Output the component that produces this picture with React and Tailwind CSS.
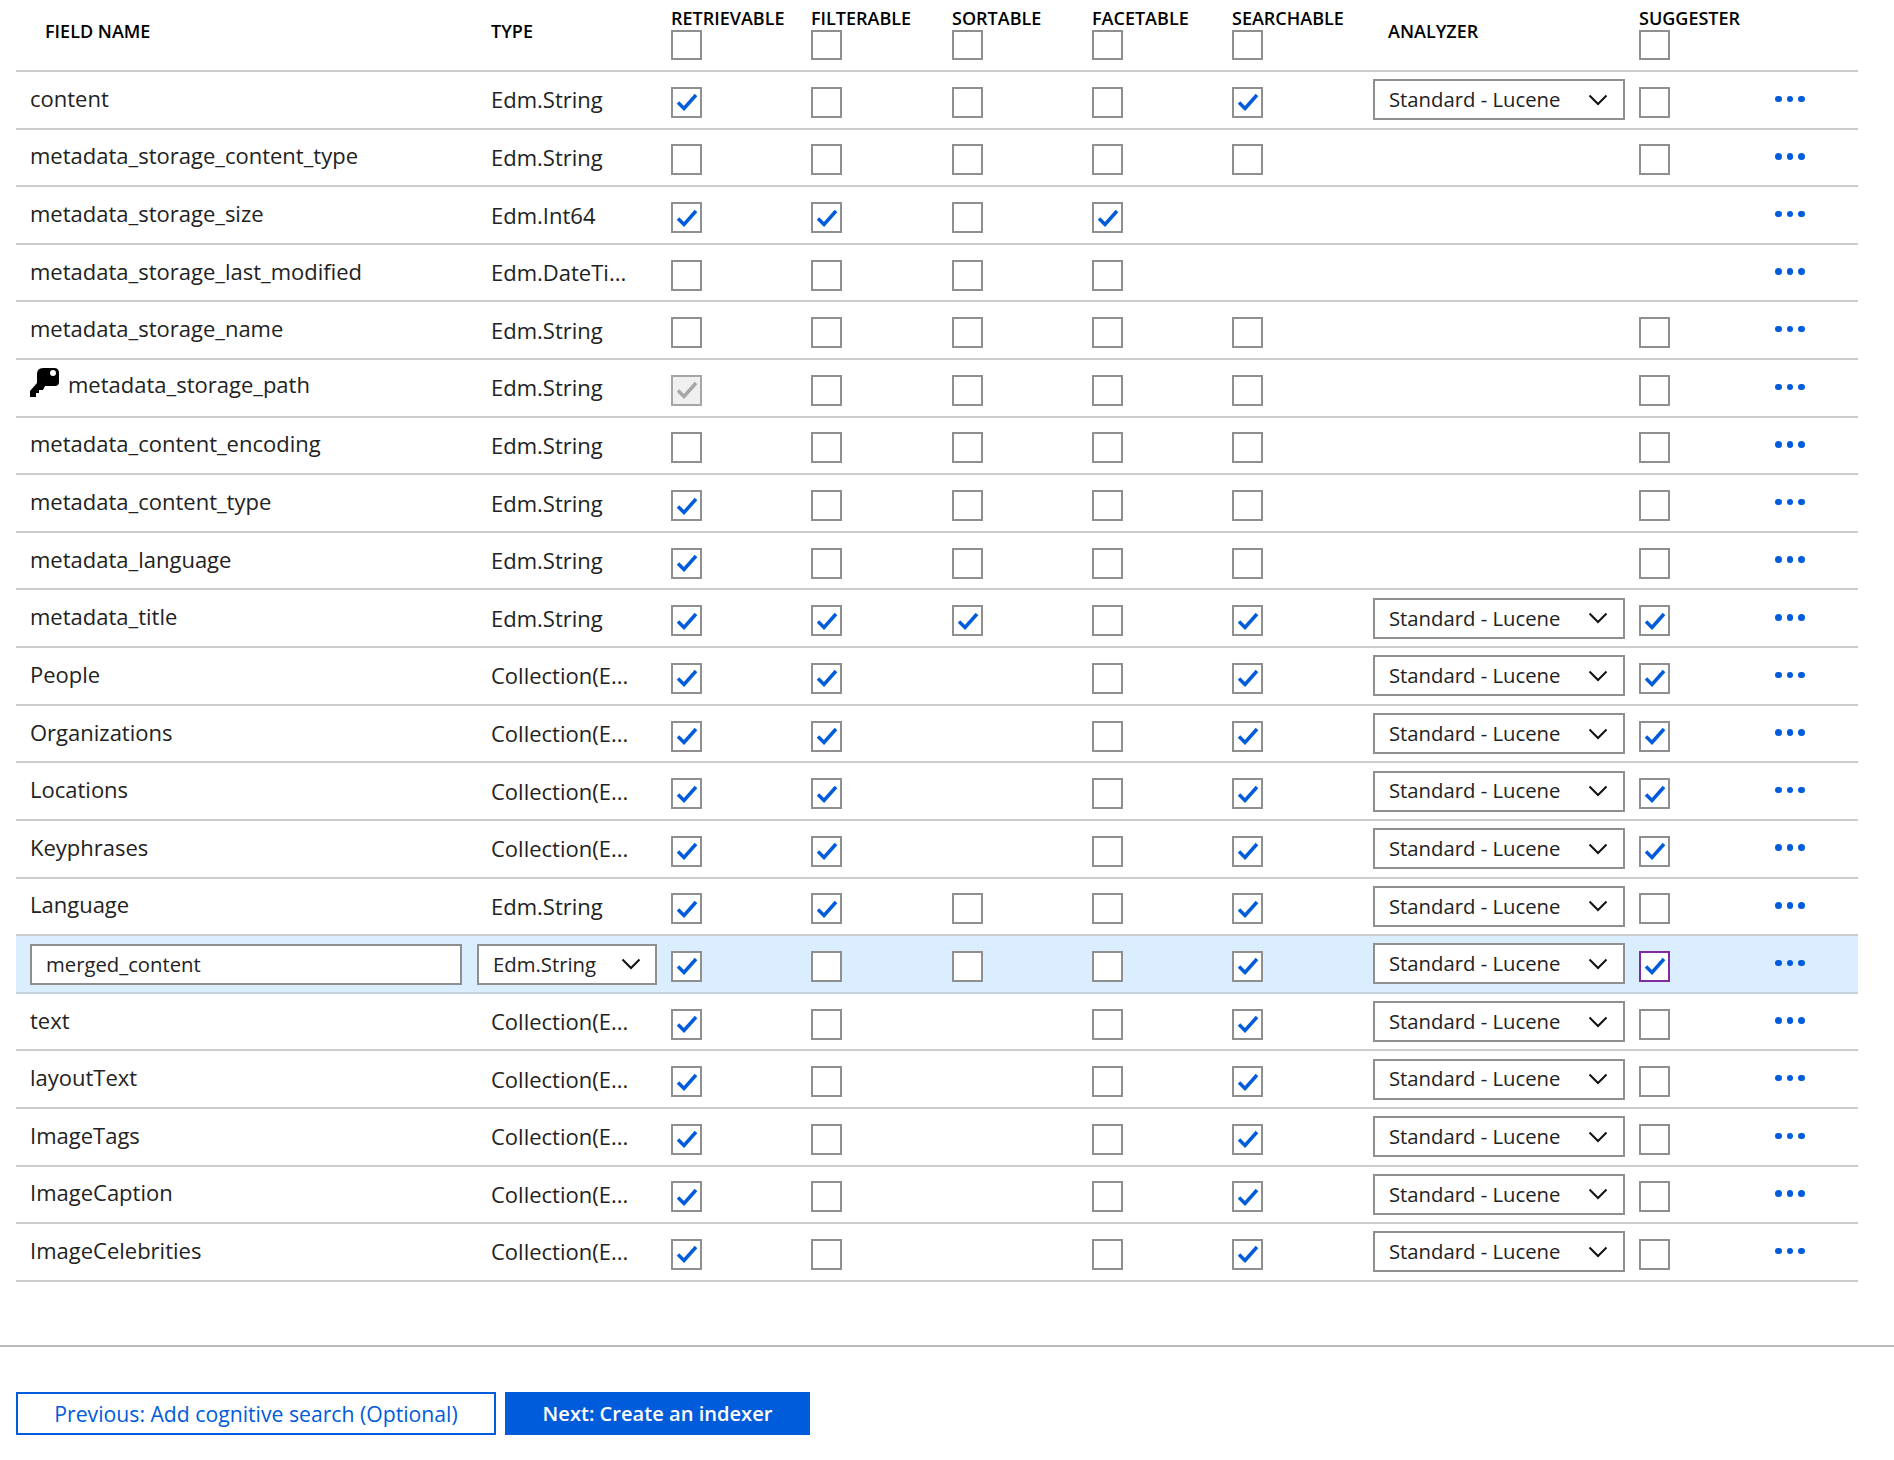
import React from 'react';

const AN = 'Standard - Lucene';

const FIELDS = [
  { name: 'content', type: 'Edm.String', f: [1, 0, 0, 0, 1], an: true, sg: 0 },
  { name: 'metadata_storage_content_type', type: 'Edm.String', f: [0, 0, 0, 0, 0], sg: 0 },
  { name: 'metadata_storage_size', type: 'Edm.Int64', f: [1, 1, 0, 1, null] },
  { name: 'metadata_storage_last_modified', type: 'Edm.DateTi...', f: [0, 0, 0, 0, null] },
  { name: 'metadata_storage_name', type: 'Edm.String', f: [0, 0, 0, 0, 0], sg: 0 },
  { name: 'metadata_storage_path', type: 'Edm.String', f: ['key', 0, 0, 0, 0], sg: 0, isKey: true },
  { name: 'metadata_content_encoding', type: 'Edm.String', f: [0, 0, 0, 0, 0], sg: 0 },
  { name: 'metadata_content_type', type: 'Edm.String', f: [1, 0, 0, 0, 0], sg: 0 },
  { name: 'metadata_language', type: 'Edm.String', f: [1, 0, 0, 0, 0], sg: 0 },
  { name: 'metadata_title', type: 'Edm.String', f: [1, 1, 1, 0, 1], an: true, sg: 1 },
  { name: 'People', type: 'Collection(E...', f: [1, 1, null, 0, 1], an: true, sg: 1 },
  { name: 'Organizations', type: 'Collection(E...', f: [1, 1, null, 0, 1], an: true, sg: 1 },
  { name: 'Locations', type: 'Collection(E...', f: [1, 1, null, 0, 1], an: true, sg: 1 },
  { name: 'Keyphrases', type: 'Collection(E...', f: [1, 1, null, 0, 1], an: true, sg: 1 },
  { name: 'Language', type: 'Edm.String', f: [1, 1, 0, 0, 1], an: true, sg: 0 },
  { name: 'merged_content', type: 'Edm.String', f: [1, 0, 0, 0, 1], an: true, sg: 1, editing: true },
  { name: 'text', type: 'Collection(E...', f: [1, 0, null, 0, 1], an: true, sg: 0 },
  { name: 'layoutText', type: 'Collection(E...', f: [1, 0, null, 0, 1], an: true, sg: 0 },
  { name: 'ImageTags', type: 'Collection(E...', f: [1, 0, null, 0, 1], an: true, sg: 0 },
  { name: 'ImageCaption', type: 'Collection(E...', f: [1, 0, null, 0, 1], an: true, sg: 0 },
  { name: 'ImageCelebrities', type: 'Collection(E...', f: [1, 0, null, 0, 1], an: true, sg: 0 },
];

const GRID = 'grid grid-cols-[461px_194px_140px_141px_140px_140px_140px_267px_136px_83px]';

function Chevron() {
  return (
    <svg width="20" height="12" viewBox="0 0 20 12" fill="none" className="shrink-0">
      <path d="M1.5 1.5 L10 10 L18.5 1.5" stroke="#111" strokeWidth="2" />
    </svg>
  );
}

function Box({ checked, disabled, focus, head }) {
  const tone = disabled
    ? 'border-[#a6a6a6] bg-[#f0f0f0]'
    : focus
      ? 'border-[#7f2b9f] bg-white'
      : 'border-[#8f8f8f] bg-white';
  return (
    <div className={`w-[31px] ${head ? 'h-[30px]' : 'h-[31px]'} border-2 flex items-center justify-center ${tone}`}>
      {checked && (
        <svg width="22" height="18" viewBox="0 0 22 18" fill="none">
          <path d="M2 9.5 L8 15.5 L20 2" stroke={disabled ? '#a6a6a6' : '#005cdb'} strokeWidth="3.5" />
        </svg>
      )}
    </div>
  );
}

function Select({ label, className }) {
  return (
    <div className={`h-[41px] border-2 border-[#8f8f8f] bg-white flex items-center justify-between text-[20.3px] text-[#222] ${className}`}>
      <span className="pb-[1px]">{label}</span>
      <Chevron />
    </div>
  );
}

function KeyIcon() {
  return (
    <svg width="30" height="30" viewBox="0 0 30 30" className="shrink-0 -mt-[4px]">
      <path
        fillRule="evenodd"
        d="M13 0 H24 Q29 0 29 5 V14 Q29 18 25 18 H15 L13 22 H9 V25 H6 V29 H0 V23 L7 15 V6 Q7 0 13 0 Z M23 2 A3 3 0 1 0 23.01 8 A3 3 0 1 0 23 2 Z"
        fill="#000"
      />
    </svg>
  );
}

function HeadCheck({ label }) {
  return (
    <div className="flex flex-col items-start pt-[6px]">
      <span className="text-[18px] leading-[24px] font-semibold text-black whitespace-nowrap">{label}</span>
      <Box head />
    </div>
  );
}

function Row({ field }) {
  const { name, type, f, an, sg, isKey, editing } = field;
  return (
    <div className={`${GRID} h-[57.62px] items-center border-b-2 ${editing ? 'bg-[#dbeeff] border-[#c5d3de]' : 'border-[#cccccc]'}`}>
      {editing ? (
        <div className="pl-[14px] flex items-center h-full pt-[1px]">
          <div className="w-[432px] h-[41px] border-2 border-[#8f8f8f] bg-white flex items-center pl-[14px] text-[20.3px] text-[#222]">
            <span className="pb-[1px]">{name}</span>
          </div>
        </div>
      ) : (
        <div className={`pl-[14px] flex items-center gap-[8px] text-[22px] text-[#222] ${isKey ? '-mt-[6px]' : '-mt-[3px]'}`}>
          {isKey && <KeyIcon />}
          <span>{name}</span>
        </div>
      )}
      {editing ? (
        <Select label={type} className="w-[180px] px-[14px] mt-[1px]" />
      ) : (
        <div className="pl-[14px] text-[22px] text-[#222]">{type}</div>
      )}
      {f.map((v, i) => (
        <div key={i} className="mt-[5px]">
          {v !== null && <Box checked={v === 1 || v === 'key'} disabled={v === 'key'} />}
        </div>
      ))}
      <div className="pl-[1px]">
        {an && <Select label={AN} className="w-[252px] pl-[14px] pr-[15px]" />}
      </div>
      <div className="mt-[5px]">
        {sg !== undefined && <Box checked={sg === 1} focus={editing} />}
      </div>
      <div className="flex gap-[5px] -mt-[2px]">
        <span className="w-[6.5px] h-[6.5px] rounded-full bg-[#005cdb]" />
        <span className="w-[6.5px] h-[6.5px] rounded-full bg-[#005cdb]" />
        <span className="w-[6.5px] h-[6.5px] rounded-full bg-[#005cdb]" />
      </div>
    </div>
  );
}

export default function App() {
  return (
    <div className="w-[1894px] h-[1460px] bg-white font-['Open_Sans',sans-serif] overflow-hidden">
      <div className="pl-[16px] w-[1858px]">
        <div className={`${GRID} h-[72px] border-b-2 border-[#cccccc]`}>
          <div className="pl-[29px] pt-[19px] text-[18px] leading-[24px] font-semibold text-black">FIELD NAME</div>
          <div className="pl-[14px] pt-[19px] text-[18px] leading-[24px] font-semibold text-black">TYPE</div>
          <HeadCheck label="RETRIEVABLE" />
          <HeadCheck label="FILTERABLE" />
          <HeadCheck label="SORTABLE" />
          <HeadCheck label="FACETABLE" />
          <HeadCheck label="SEARCHABLE" />
          <div className="pl-[16px] pt-[19px] text-[18px] leading-[24px] font-semibold text-black">ANALYZER</div>
          <HeadCheck label="SUGGESTER" />
          <div />
        </div>
        {FIELDS.map((field) => (
          <Row key={field.name} field={field} />
        ))}
      </div>
      <div className="mt-[63px] border-t-2 border-[#bbbbbb] pt-[45px] pl-[16px] flex gap-[9px]">
        <button className="w-[480px] h-[43px] border-2 border-[#005cdb] bg-white text-[#005cdb] text-[21.2px] font-medium flex items-center justify-center pt-[1px]">
          Previous: Add cognitive search (Optional)
        </button>
        <button className="w-[305px] h-[43px] bg-[#005cdb] text-white text-[20.1px] font-semibold flex items-center justify-center pt-[1px]">
          Next: Create an indexer
        </button>
      </div>
    </div>
  );
}
